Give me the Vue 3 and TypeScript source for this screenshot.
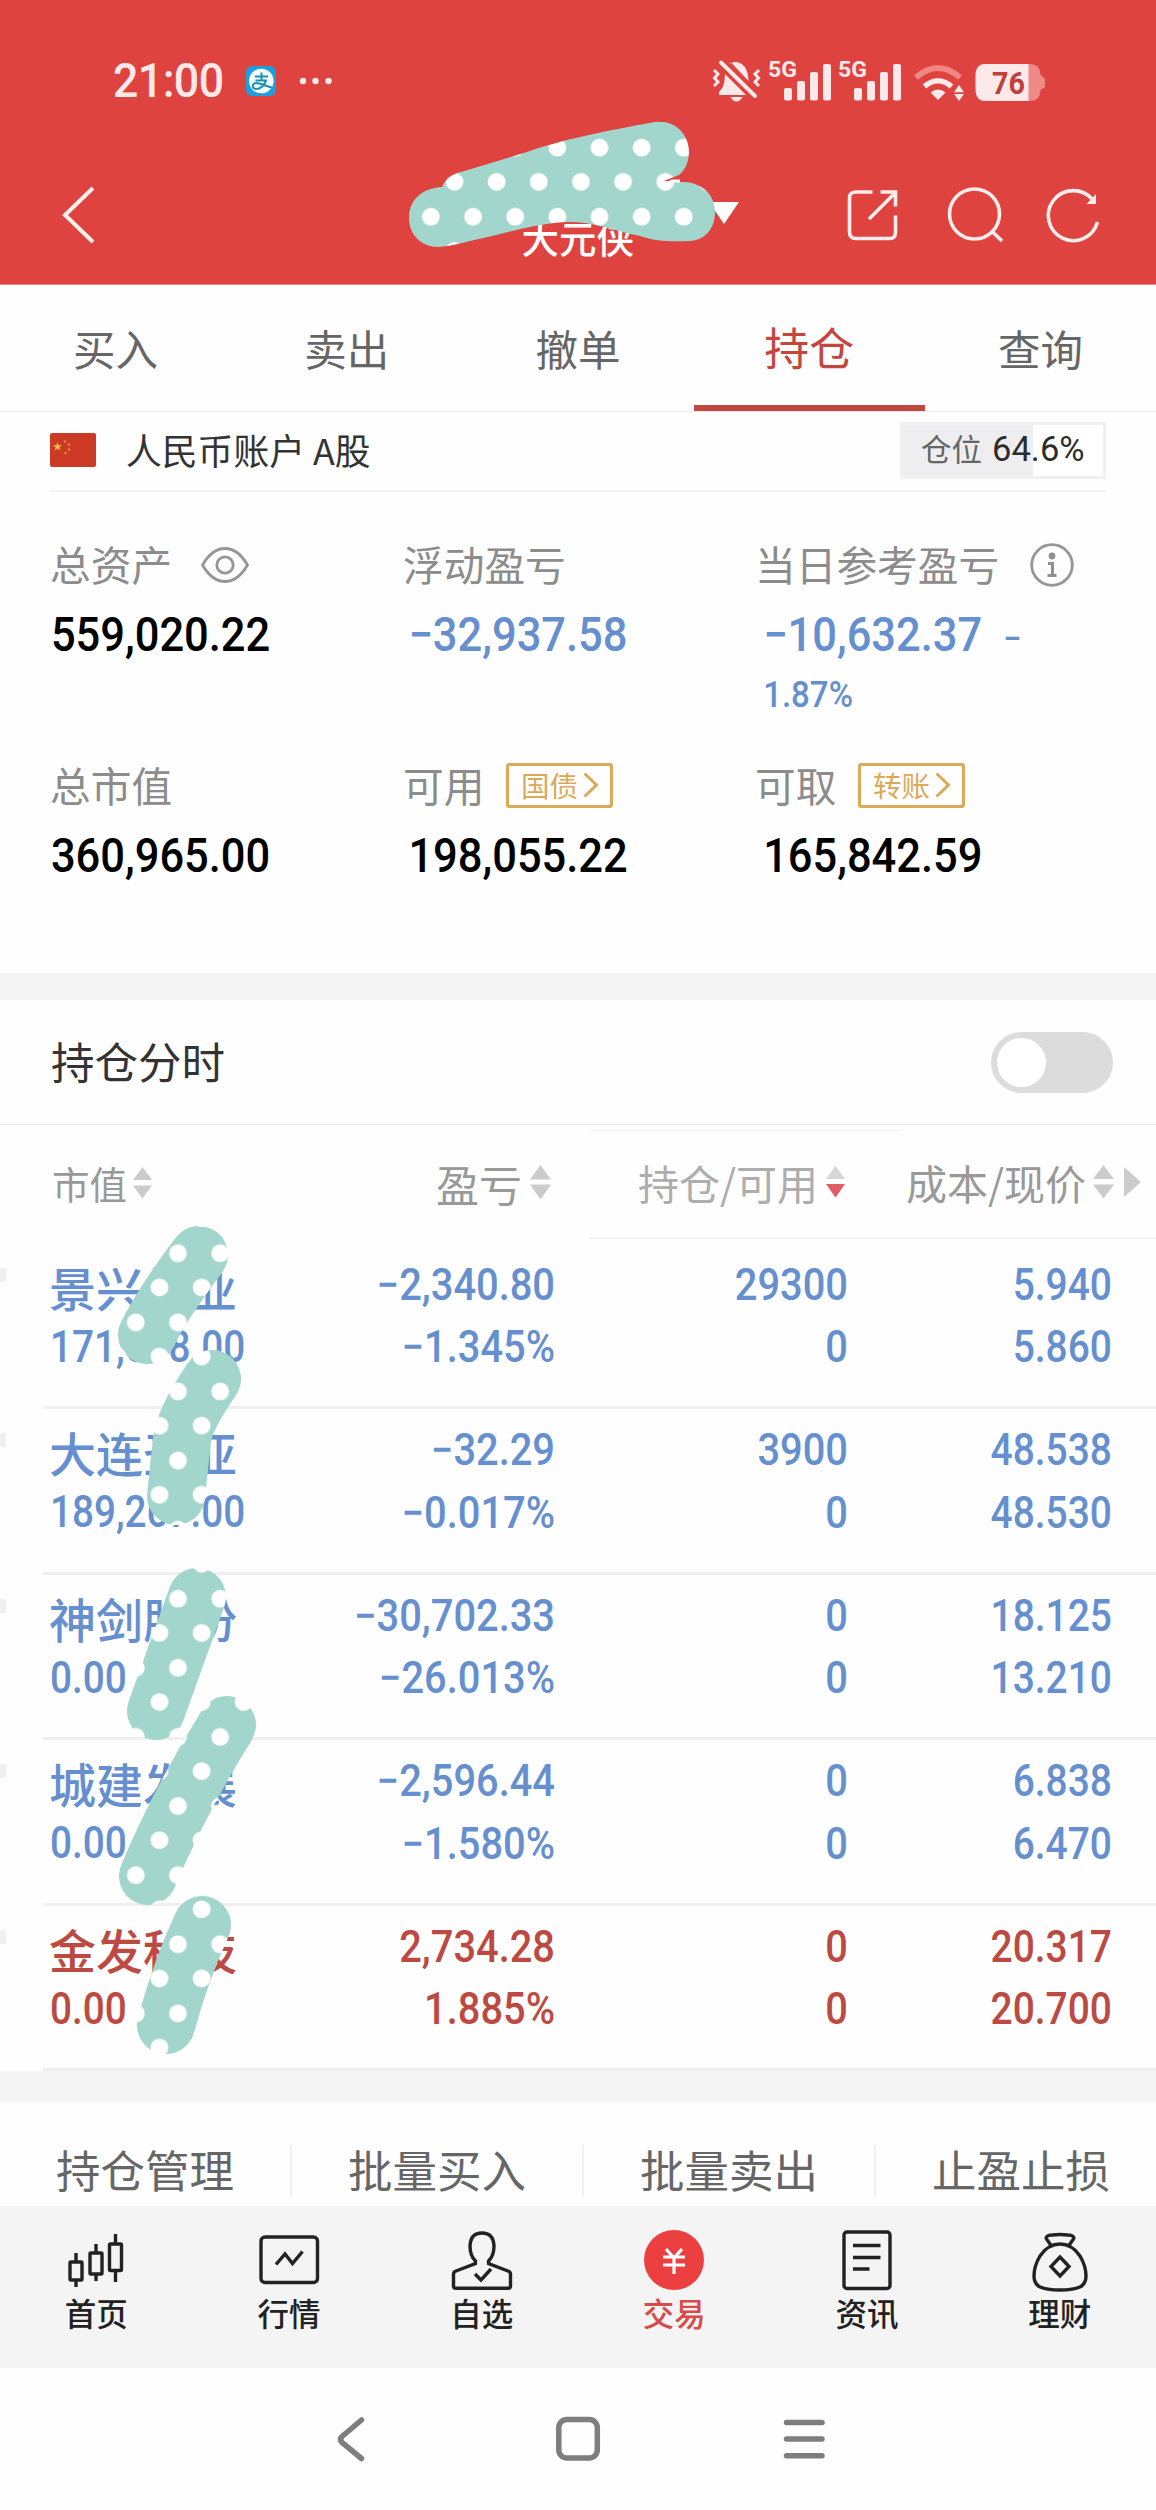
<script setup lang="ts">
interface Holding {
  name: string
  value: string
  profit: string
  rate: string
  held: string
  usable: string
  cost: string
  price: string
  up?: boolean
}

const tabs: string[] = ['买入', '卖出', '撤单', '持仓', '查询']
const activeTab = '持仓'

const holdings: Holding[] = [
  { name: '景兴纸业', value: '171,698.00', profit: '−2,340.80', rate: '−1.345%', held: '29300', usable: '0', cost: '5.940', price: '5.860' },
  { name: '大连圣亚', value: '189,267.00', profit: '−32.29', rate: '−0.017%', held: '3900', usable: '0', cost: '48.538', price: '48.530' },
  { name: '神剑股份', value: '0.00', profit: '−30,702.33', rate: '−26.013%', held: '0', usable: '0', cost: '18.125', price: '13.210' },
  { name: '城建发展', value: '0.00', profit: '−2,596.44', rate: '−1.580%', held: '0', usable: '0', cost: '6.838', price: '6.470' },
  { name: '金发科技', value: '0.00', profit: '2,734.28', rate: '1.885%', held: '0', usable: '0', cost: '20.317', price: '20.700', up: true },
]

const actions: string[] = ['持仓管理', '批量买入', '批量卖出', '止盈止损']
</script>

<template>
  <div class="screen">
    <header class="header">
      <div class="status">
        <span class="time">21:00</span>
        <svg class="alipay" width="30" height="30" viewBox="0 0 30 30">
          <rect width="30" height="30" rx="6" fill="#1c9fdc" />
          <circle cx="15.3" cy="15" r="12.3" fill="#f4feff" />
          <path d="M9 10.5H22M15.5 6.5V14.5M9.5 14.5H20C19 19 14 23.5 9.500 23C5 22 6.500 17 10.500 17C15 17.300 20 20 27 22" fill="none" stroke="#1b8fb8" stroke-width="2" />
        </svg>
        <svg class="dots" width="34" height="8" viewBox="0 0 34 8">
          <circle cx="4" cy="4" r="3.200" /><circle cx="16.500" cy="4" r="3.200" /><circle cx="29.500" cy="4" r="3.200" />
        </svg>
        <svg class="signals" width="336" height="66" viewBox="710 47 336 66">
          <g fill="#fde9e9">
            <path d="M729 63Q737 58 744 65Q748 69 748.500 80L731 61.500ZM725 73L746 94H719V91Q724 86 724.500 79ZM730.500 96H742.500Q740 100.500 736.500 100.500Q733 100.500 730.500 96Z" />
            <path d="M721 61.500L755 95" fill="none" stroke="#fde9e9" stroke-width="4" stroke-linecap="round" />
            <path d="M714 69L718 73L714.500 77L718 81L714 85M759 69L755 73L758.500 77L755 81L759 85" fill="none" stroke="#fde9e9" stroke-width="3" />
            <g v-for="dx in [0, 70]" :key="dx" :transform="`translate(${dx} 0)`">
              <text x="768" y="75.500" class="five" textLength="29" lengthAdjust="spacingAndGlyphs">5G</text>
              <rect x="784" y="87" width="8" height="12.500" rx="2" />
              <rect x="797" y="80" width="8" height="19.500" rx="2" />
              <rect x="810" y="71" width="8" height="28.500" rx="2" />
              <rect x="823" y="63" width="8" height="36.500" rx="2" />
            </g>
            <path d="M938 99L930.500 91.500Q938 85.500 945.500 91.500Z" />
            <path d="M924.500 85.500Q938 74 951.500 85.500" fill="none" stroke="#fde9e9" stroke-width="5.500" />
            <path d="M916 76.500Q938 57.500 960 76.500" fill="none" stroke="#f08784" stroke-width="6" />
            <path d="M959 84L964 91.200H954ZM959 100L964 93H954Z" />
          </g>
          <path d="M1020 63H1030Q1040 63 1040.500 74L1045 78V86L1040.500 89Q1040 100 1030 100H1020Z" fill="#ee8986" />
          <path d="M1028.500 63H985Q975.500 63 975.500 75V88Q975.500 100 985 100H1028.500Z" fill="#fde9e9" />
          <text x="992" y="93" class="charge" textLength="33" lengthAdjust="spacingAndGlyphs">76</text>
        </svg>
      </div>
      <div class="navbar">
        <svg class="back" width="36" height="60" viewBox="0 0 36 60">
          <path d="M32 3L4 30L32 57" fill="none" stroke="#fff0ef" stroke-width="4" />
        </svg>
        <div class="title">
          <span>大元侠</span>
          <svg width="32" height="24" viewBox="0 0 32 24"><path d="M1 1H31L16 23Z" fill="#fff" /></svg>
        </div>
        <svg class="tools" width="260" height="62" viewBox="844 184 260 62" fill="none" stroke="#fdeceb" stroke-width="3.600">
          <path d="M872.500 191H856Q849.500 191 849.500 197V231Q849.500 237.500 856 237.500H890Q895.500 237.500 895.500 231V214.500M880.500 191H895.500V205.500M895 192L869 218" />
          <circle cx="974.500" cy="213" r="25" />
          <path d="M991 229.500L1002 240" />
          <path d="M1092 198A25 25 0 1 0 1097.500 221" />
          <path d="M1096 193V203H1086.500Z" fill="#fdeceb" stroke="none" />
        </svg>
      </div>
    </header>

    <nav class="tabs">
      <div v-for="tab in tabs" :key="tab" class="tab" :class="{ active: tab === activeTab }">{{ tab }}</div>
    </nav>

    <section class="account">
      <svg width="46" height="34" viewBox="0 0 46 34">
        <rect width="46" height="34" rx="2" fill="#cc3a26" />
        <path d="M7.500 9L8.600 12.200H12L9.300 14.200L10.300 17.400L7.500 15.400L4.700 17.400L5.700 14.200L3 12.200H6.400Z" fill="#f6c53f" />
        <g fill="#e5913a"><circle cx="15" cy="8.500" r="1.200" /><circle cx="19" cy="11.500" r="1.200" /><circle cx="19" cy="16.500" r="1.200" /><circle cx="15.500" cy="20" r="1.200" /></g>
      </svg>
      <span class="account-name">人民币账户 A股</span>
      <div class="ratio"><span class="ratio-label">仓位</span><span class="ratio-value">64.6%</span></div>
    </section>

    <section class="assets">
      <div class="asset">
        <div class="label">总资产
          <svg class="eye" width="48" height="36" viewBox="0 0 48 36" fill="none" stroke="#969696" stroke-width="2.800">
            <path d="M1.500 18Q11 1.500 24 1.500Q37 1.500 46.500 18Q37 34.500 24 34.500Q11 34.500 1.500 18Z" /><circle cx="24" cy="18" r="8.200" />
          </svg>
        </div>
        <div class="value">559,020.22</div>
      </div>
      <div class="asset">
        <div class="label">浮动盈亏</div>
        <div class="value down">−32,937.58</div>
      </div>
      <div class="asset">
        <div class="label">当日参考盈亏
          <svg class="info" width="44" height="44" viewBox="0 0 44 44">
            <circle cx="22" cy="22" r="20.300" fill="none" stroke="#969696" stroke-width="2.800" />
            <circle cx="22" cy="13" r="3.400" fill="#8f8f8f" />
            <path d="M18 20.500H22.500V32.500M17.500 32.500H26.500" fill="none" stroke="#8f8f8f" stroke-width="3" />
          </svg>
        </div>
        <div class="value down">−10,632.37<span class="pct-sign">−</span><div class="pct">1.87%</div></div>
      </div>
      <div class="asset">
        <div class="label">总市值</div>
        <div class="value">360,965.00</div>
      </div>
      <div class="asset">
        <div class="label">可用
          <span class="tag">国债<svg width="16" height="26" viewBox="0 0 16 26"><path d="M1.500 1.500L13.500 13L1.500 24.500" /></svg></span>
        </div>
        <div class="value">198,055.22</div>
      </div>
      <div class="asset">
        <div class="label">可取
          <span class="tag">转账<svg width="16" height="26" viewBox="0 0 16 26"><path d="M1.500 1.500L13.500 13L1.500 24.500" /></svg></span>
        </div>
        <div class="value">165,842.59</div>
      </div>
    </section>

    <section class="intraday">
      <span>持仓分时</span>
      <div class="switch"><i></i></div>
    </section>

    <div class="columns">
      <div class="col c1">市值<svg width="19" height="32" viewBox="0 0 19 32"><path d="M9.500 0L19 13H0ZM0 18.500H19L9.500 31.500Z" /></svg></div>
      <div class="col c2">盈亏<svg width="21" height="35" viewBox="0 0 21 35"><path d="M10.500 0L21 14.500H0ZM0 19.500H21L10.500 34.500Z" /></svg></div>
      <div class="col c3">持仓/可用<svg width="19" height="32" viewBox="0 0 19 32"><path d="M9.500 0L19 13H0Z" class="off" /><path d="M0 18H19L9.500 31.500Z" class="on" /></svg></div>
      <div class="col c4">成本/现价<svg width="21" height="34" viewBox="0 0 21 34"><path d="M10.500 0L21 14H0ZM0 19.500H21L10.500 33.500Z" /></svg><svg class="more" width="17" height="30" viewBox="0 0 17 30"><path d="M0 0L17 15L0 30Z" /></svg></div>
    </div>

    <div class="rows">
      <div v-for="h in holdings" :key="h.name" class="row" :class="{ up: h.up }">
        <i class="stub"></i>
        <div class="name-cell">
          <div class="name">{{ h.name }}</div>
          <div class="num left">{{ h.value }}</div>
        </div>
        <div class="cell profit"><div class="num">{{ h.profit }}</div><div class="num">{{ h.rate }}</div></div>
        <div class="cell held"><div class="num">{{ h.held }}</div><div class="num">{{ h.usable }}</div></div>
        <div class="cell cost"><div class="num">{{ h.cost }}</div><div class="num">{{ h.price }}</div></div>
      </div>
    </div>

    <div class="actions">
      <div v-for="a in actions" :key="a" class="action">{{ a }}</div>
    </div>

    <nav class="tabbar">
      <div class="item">
        <svg width="70" height="70" viewBox="61 2228 70 70" class="line">
          <rect x="70" y="2262" width="12" height="18" rx="1" /><path d="M76 2253V2262M76 2280V2287" />
          <rect x="90" y="2253" width="12" height="21" rx="1" /><path d="M96 2244V2253M96 2274V2281" />
          <rect x="109.500" y="2244" width="12" height="26.500" rx="1" /><path d="M115.500 2234V2244M115.500 2270V2282" />
        </svg>
        <span>首页</span>
      </div>
      <div class="item">
        <svg width="70" height="70" viewBox="-35 -35 70 70" class="line">
          <rect x="-28" y="-26" width="56.500" height="45.500" rx="4" /><path d="M-13 1.500L-4 -9L3.500 .500L13.500 -11.500" />
        </svg>
        <span>行情</span>
      </div>
      <div class="item">
        <svg width="70" height="70" viewBox="-35 -35 70 70" class="line">
          <path d="M-6.500 -2Q-12 -7 -12 -17Q-11.500 -30 0 -30Q11.500 -30 12 -17Q12 -7 6.500 -2V.500L26 8Q28.500 9 28.500 11V23Q28.500 25.300 26 25.300H-26Q-28.500 25.300 -28.500 23V11Q-28.500 9 -26 8L-6.500 .500Z" />
          <path d="M-6.500 .500V-2M6.500 .500V-2" />
          <path d="M-4.700 .200H4.700" class="neck" />
          <path d="M-7 11L-1 17L9 6" />
        </svg>
        <span>自选</span>
      </div>
      <div class="item current">
        <svg width="70" height="70" viewBox="-35 -35 70 70">
          <circle cx="0" cy="-3" r="30" fill="#ec4040" />
          <path d="M-8 -14L0 -5L8 -14M0 -5V11M-11 -6H11M-11 2H11" fill="none" stroke="#fff" stroke-width="3.200" />
        </svg>
        <span>交易</span>
      </div>
      <div class="item">
        <svg width="70" height="70" viewBox="-35 -35 70 70" class="line">
          <rect x="-23" y="-31" width="46" height="56.500" rx="3" /><path d="M-14 -17.500H13.500M-14 -5.500H13.500M-14 6H2.500" />
        </svg>
        <span>资讯</span>
      </div>
      <div class="item">
        <svg width="70" height="70" viewBox="-35 -35 70 70" class="line">
          <path d="M-8.500 -17L-13.500 -24Q-15 -27.500 -8 -28Q0 -29 8 -28Q15 -27.500 13.500 -24L8.500 -17M0 -19Q12 -19 20 -7Q26 3 26 13Q26 20 21 23.500Q14 27 0 27Q-14 27 -21 23.500Q-26 20 -26 13Q-26 3 -20 -7Q-12 -19 0 -19Z" />
          <path d="M0 -6L9 3.500L0 13L-9 3.500Z" />
        </svg>
        <span>理财</span>
      </div>
    </nav>

    <footer class="sysnav">
      <svg width="488" height="50" viewBox="337 2414 488 50" fill="none" stroke="#7e7e7e" stroke-width="5.500" stroke-linecap="round">
        <path d="M361.500 2420L342 2436.500Q339 2439.500 342 2442.500L361.500 2458.500" />
        <rect x="558.800" y="2419.500" width="38.500" height="38.500" rx="8" />
        <path d="M786.500 2422.500H822M786.500 2439H822M786.500 2455.700H822" />
      </svg>
    </footer>

    <!-- dotted washi-tape strokes hiding the account and stock names -->
    <svg class="tape" width="1156" height="2510" viewBox="0 0 1156 2510">
      <defs>
        <pattern id="polka" width="42.150" height="69.100" patternUnits="userSpaceOnUse">
          <rect width="43" height="70" fill="#a2d6cc" />
          <circle cx="9.400" cy="9.400" r="8.900" fill="#fff" />
          <circle cx="33" cy="43.600" r="8.900" fill="#fff" />
        </pattern>
      </defs>
      <path fill="url(#polka)" d="M438 247C422 247 409 235 409 218C409 200 422 188 442 187C446 178 452 174 461 172L527 152C560 140 610 130 655 122C675 120 689 134 689 152C689 162 685 170 679 175C672 178 666 180 664 181L680 182C702 181 715 195 715 212C715 230 704 240 690 241C670 242 655 241 640 236C610 230 595 222 568 222C535 223 500 235 448 246Z" />
      <path d="M666 182.500L672 179.500H680V182.500Z" fill="#fff" />
      <g fill="none" stroke="url(#polka)" stroke-width="58" stroke-linecap="round">
        <path d="M199 1255Q162 1304 147 1335" />
        <path d="M212 1379Q184 1420 182 1440L176 1496" />
        <path d="M197 1597L156 1711" />
        <path d="M227 1725Q180 1800 148 1876" />
        <path d="M202 1925Q181 1970 166 2025" />
      </g>
    </svg>
  </div>
</template>

<style>
body {
  background: #fefefe;
}
</style>

<style scoped>
.screen {
  position: relative;
  width: 1156px;
  height: 2510px;
  overflow: hidden;
  background: #fefefe;
  font-family: "Noto Sans CJK SC", sans-serif;
  color: #333;
}
.screen svg {
  display: block;
  flex: none;
}
.header {
  height: 285px;
  background: #df433f;
  border-bottom: 1px solid #f08a88;
  box-sizing: border-box;
}
.status {
  display: flex;
  align-items: center;
  height: 162px;
  padding-left: 113px;
}
.time {
  width: 133px;
  font: 500 47.500px/60px Roboto, sans-serif;
  letter-spacing: -0.6px;
  color: #fde9e9;
  transform: scaleX(0.94);
  transform-origin: left;
}
.dots {
  margin-left: 23px;
  fill: #fde9e9;
}
.screen .signals {
  margin-left: 377px;
}
.five {
  font: 700 22.500px Roboto, sans-serif;
}
.charge {
  font: 700 32px Roboto, sans-serif;
  fill: #c0403d;
}
.navbar {
  display: flex;
  align-items: flex-start;
  height: 122px;
  padding: 23px 52px 0 61px;
  box-sizing: border-box;
}
.title {
  display: flex;
  justify-content: flex-end;
  width: 643px;
}
.title span {
  margin: 29px 74px 0 0;
  font-size: 37.500px;
  line-height: 46px;
  font-weight: 500;
  color: #fff;
}
.title svg {
  margin-top: 16px;
}
.tools {
  margin-left: 104px;
}
.tabs {
  display: flex;
  height: 126px;
  border-bottom: 1px solid #e9e9e9;
}
.tab {
  flex: 1;
  line-height: 125px;
  text-align: center;
  font-size: 42.500px;
  color: #666;
}
.tab.active {
  height: 120px;
  font-size: 45px;
  line-height: 123px;
  color: #c4463f;
  border-bottom: 6px solid #c04840;
}
.account {
  display: flex;
  align-items: center;
  height: 80px;
  margin: 0 50px;
  padding-bottom: 2px;
  border-bottom: 2px solid #f2f2f2;
  box-sizing: border-box;
}
.account-name {
  margin: -3px 0 0 30px;
  flex: 1;
  font-size: 35.800px;
  line-height: 50px;
  color: #333;
}
.ratio {
  display: flex;
  align-items: center;
  width: 206px;
  height: 57px;
  padding-left: 18px;
  box-sizing: border-box;
  border: 3px solid #f0f0f2;
  background: linear-gradient(90deg, #eeeef0 130px, #fff 130px);
}
.ratio-label {
  margin-top: -4px;
  font-size: 30.500px;
  color: #666;
}
.ratio-value {
  margin: -2px 0 0 10px;
  font: 400 34.500px/40px Roboto, sans-serif;
  color: #2c2c2c;
}
.assets {
  display: grid;
  grid-template-columns: 353px 352px 1fr;
  grid-template-rows: 221px 1fr;
  height: 481px;
  padding: 44px 0 0 50px;
  box-sizing: border-box;
}
.label {
  display: flex;
  align-items: center;
  height: 56px;
  font-size: 40.700px;
  line-height: 56px;
  color: #8c8c8c;
}
.eye {
  margin: 2px 0 0 29px;
}
.info {
  margin: 1px 0 0 31px;
}
.value {
  margin-top: 15px;
  padding-left: 1px;
  font: 500 48px/56px Roboto, sans-serif;
  color: #000;
  white-space: nowrap;
  transform: scaleX(0.905);
  transform-origin: left;
}
.asset:nth-child(3n + 2) .value {
  padding-left: 6px;
}
.asset:nth-child(3n) .value {
  padding-left: 9px;
}
.value.down {
  color: #658fcf;
}
.pct-sign {
  margin-left: 23px;
  font-size: 36px;
}
.pct {
  font-size: 36.500px;
  line-height: 56px;
}
.tag {
  display: flex;
  align-items: center;
  justify-content: center;
  gap: 5px;
  width: 107px;
  height: 45px;
  margin-left: 22px;
  box-sizing: border-box;
  border: 3px solid #dba957;
  border-radius: 3px;
  font-size: 28.500px;
  line-height: 38px;
  color: #dba957;
}
.tag svg {
  fill: none;
  stroke: #dba957;
  stroke-width: 3;
}
.intraday {
  display: flex;
  align-items: center;
  justify-content: space-between;
  height: 124px;
  padding: 0 43px 0 51px;
  border-top: 27px solid #f4f4f4;
  border-bottom: 1px solid #e8e8ea;
  font-size: 43.500px;
  color: #333;
}
.intraday span {
  margin-top: -3px;
}
.switch {
  width: 122px;
  height: 61px;
  padding: 6px;
  box-sizing: border-box;
  border-radius: 31px;
  background: #dcdcdc;
}
.switch i {
  display: block;
  width: 49px;
  height: 49px;
  border-radius: 50%;
  background: #fff;
}
.columns {
  display: flex;
  height: 118.500px;
  color: #999;
}
.col {
  display: flex;
  align-items: center;
  justify-content: flex-end;
  box-sizing: border-box;
  line-height: 60px;
  white-space: nowrap;
}
.col svg {
  margin-left: 8px;
  fill: #cbcbcb;
}
.c1 {
  width: 152px;
  padding-bottom: 3px;
  font-size: 37.500px;
}
.c1 svg {
  margin-left: 6px;
}
.c2 {
  width: 399px;
  padding-bottom: 3px;
  font-size: 43px;
}
.c3 {
  width: 312px;
  margin: 5px 0 4.500px 38px;
  padding-right: 56px;
  border-top: 1px solid #f2f2f2;
  border-bottom: 2px solid #f2f2f2;
  padding-bottom: 4px;
  font-size: 41px;
  color: #adadad;
}
.c3 .on {
  fill: #e15d63;
}
.c3 .off {
  fill: #d6d6d6;
}
.c4 {
  flex: 1;
  margin: 5px 0 4.500px;
  padding-right: 15px;
  border-bottom: 2px solid #f2f2f2;
  padding-bottom: 3px;
  font-size: 41px;
}
.screen .c4 svg {
  margin-left: 7px;
}
.screen .c4 .more {
  margin-left: 10px;
}
.row {
  display: flex;
  height: 165.500px;
  color: #658fcf;
}
.row.up {
  color: #bd4a42;
}
.stub {
  width: 6px;
  height: 14px;
  margin: 24px 37px 0 0;
  background: #f0f0f2;
}
.name-cell,
.cell {
  flex: none;
  padding-top: 10px;
  box-sizing: border-box;
  border-bottom: 3px solid #efefef;
}
.name-cell {
  width: 257px;
  padding-left: 6px;
}
.name {
  margin-top: 1px;
  height: 61px;
  font-size: 47px;
  line-height: 63px;
  font-weight: 500;
}
.num {
  font: 500 44px/62.500px Roboto, sans-serif;
  text-align: right;
  white-space: nowrap;
  transform: scaleX(0.905);
  transform-origin: right;
}
.num.left {
  padding-left: 1px;
  text-align: left;
  transform: scaleX(0.88);
  transform-origin: left;
}
.profit {
  width: 255px;
}
.held {
  width: 293px;
}
.cost {
  width: 308px;
  padding-right: 44px;
}
.cost .num {
  transform: scaleX(0.885);
}
.actions {
  display: flex;
  height: 104px;
  border-top: 31px solid #f4f4f4;
  overflow: hidden;
}
.action {
  flex: none;
  width: 292px;
  height: 52px;
  margin-top: 43px;
  line-height: 47px;
  text-align: center;
  font-size: 44.500px;
  color: #666;
  box-sizing: border-box;
  border-right: 2px solid #f1f1f1;
}
.tabbar {
  display: flex;
  height: 162px;
  background: #f4f4f4;
}
.item {
  flex: 1;
  display: flex;
  flex-direction: column;
  align-items: center;
  padding-top: 22px;
  font-size: 31.500px;
  line-height: 40px;
  font-weight: 500;
  color: #222;
}
.item svg {
  overflow: visible;
}
.item span {
  margin-top: -6px;
}
.line {
  fill: none;
  stroke: #222;
  stroke-width: 3.400;
}
.line .neck {
  stroke: #f4f4f4;
  stroke-width: 5;
}
.item.current {
  color: #d94a4a;
}
.sysnav {
  display: flex;
  justify-content: center;
  padding-top: 46px;
}
.sysnav svg {
  margin-left: 6px;
  overflow: visible;
}
.tape {
  position: absolute;
  left: 0;
  top: 0;
}
</style>
